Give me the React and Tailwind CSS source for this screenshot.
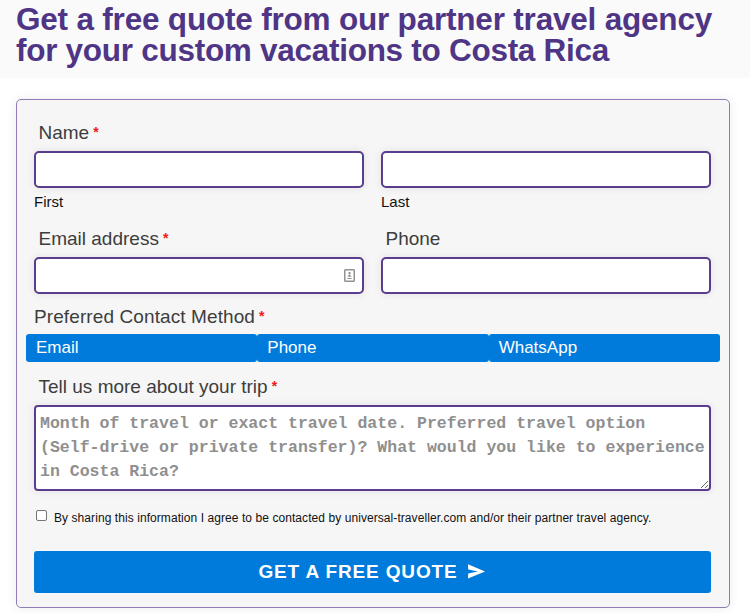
import React, { useState } from 'react';

const contactMethods = ['Email', 'Phone', 'WhatsApp'];

const Required = () => (
  <span className="mb-[3px] ml-[4px] text-[14px] leading-none font-bold text-[#f01818]">*</span>
);

const Label = ({ htmlFor, required, children }) => (
  <label
    htmlFor={htmlFor}
    className="flex h-[24px] items-center pl-[4.5px] text-[19px] text-[#3d3d3d]"
  >
    {children}
    {required && <Required />}
  </label>
);

const TextInput = ({ id, type = 'text', value, onChange }) => (
  <input
    id={id}
    name={id}
    type={type}
    value={value}
    onChange={onChange}
    className="block h-[37px] w-full rounded-[5px] border-2 border-[#5a3d8c] bg-white px-2 shadow-[0_0_8px_rgba(0,0,0,0.09)] outline-none"
  />
);

const AutofillIcon = () => (
  <svg width="11" height="13" viewBox="0 0 11 13" fill="none">
    <rect x="0.75" y="0.75" width="9.5" height="11.5" rx="0.8" stroke="#929292" strokeWidth="1.5" />
    <circle cx="5.5" cy="4.1" r="1.2" fill="#8f8f8f" />
    <path d="M3.5 7.8 5.5 5 7.5 7.8ZM3.4 9h4.2v1H3.4Z" fill="#8f8f8f" />
  </svg>
);

const SendIcon = () => (
  <svg width="17" height="15" viewBox="0 0 17 15" fill="white">
    <path d="M0 0.3 17 7.4 0 14.5 0.2 9.4 10 7.4 0.2 5.4Z" />
  </svg>
);

const App = () => {
  const [form, setForm] = useState({
    first: '',
    last: '',
    email: '',
    phone: '',
    message: '',
    agree: false
  });

  const setField = (name) => (e) => setForm({ ...form, [name]: e.target.value });

  return (
    <div className="h-[613px] overflow-hidden bg-white font-['Liberation_Sans',Arial,sans-serif]">
      <header className="h-[78px] bg-[#fafafa] pt-[4px] pl-[16px]">
        <h1 className="text-[31.5px] leading-[31px] font-bold tracking-[-0.2px] whitespace-nowrap text-[#4f3585]">
          Get a free quote from our partner travel agency
          <br />
          <span className="tracking-[-0.28px]">for your custom vacations to Costa Rica</span>
        </h1>
      </header>

      <form
        onSubmit={(e) => e.preventDefault()}
        className="mt-[21px] ml-[16px] h-[509px] w-[714px] rounded-[5px] border border-[#8f7bb5] bg-[#f6f6f6] pt-[21px] pr-[18px] pl-[17px] shadow-[0_0_12px_rgba(0,0,0,0.08)]"
      >
        {/* Name */}
        <Label htmlFor="first" required>Name</Label>
        <div className="mt-[6px] grid grid-cols-2 gap-[17px]">
          <div>
            <TextInput id="first" value={form.first} onChange={setField('first')} />
            <p className="mt-[4px] text-[15px] leading-[20px] text-[#111]">First</p>
          </div>
          <div>
            <TextInput id="last" value={form.last} onChange={setField('last')} />
            <p className="mt-[4px] text-[15px] leading-[20px] text-[#111]">Last</p>
          </div>
        </div>

        {/* Email and phone */}
        <div className="mt-[15px] grid grid-cols-2 gap-[17px]">
          <div>
            <Label htmlFor="email" required>Email address</Label>
            <div className="relative mt-[6px]">
              <TextInput id="email" type="email" value={form.email} onChange={setField('email')} />
              <span className="absolute top-[12px] right-[9px]">
                <AutofillIcon />
              </span>
            </div>
          </div>
          <div>
            <Label htmlFor="phone">Phone</Label>
            <div className="mt-[6px]">
              <TextInput id="phone" type="tel" value={form.phone} onChange={setField('phone')} />
            </div>
          </div>
        </div>

        {/* Contact method */}
        <div className="mt-[11px] flex h-[24px] items-center text-[19px] tracking-[0.1px] text-[#3d3d3d]">
          Preferred Contact Method
          <Required />
        </div>
        <div className="-mr-[9px] -ml-[8px] mt-[5px] grid grid-cols-3">
          {contactMethods.map((method) => (
            <button
              key={method}
              type="button"
              className="h-[28px] rounded-[3px] bg-[#007bdb] pl-[10px] text-left text-[17px] text-white"
            >
              {method}
            </button>
          ))}
        </div>

        {/* Trip details */}
        <div className="mt-[13px]">
          <Label htmlFor="message" required>Tell us more about your trip</Label>
        </div>
        <textarea
          id="message"
          name="message"
          value={form.message}
          onChange={setField('message')}
          placeholder="Month of travel or exact travel date. Preferred travel option (Self-drive or private transfer)? What would you like to experience in Costa Rica?"
          className="mt-[6px] block h-[86px] w-full overflow-hidden rounded-[4px] border-2 border-[#5a3d8c] bg-white pt-[5px] pr-0 pl-[4px] font-['Liberation_Mono',monospace] text-[16.54px] leading-[24px] font-bold shadow-[0_0_8px_rgba(0,0,0,0.09)] outline-none placeholder:text-[#8f8f8f]"
        />

        {/* Consent */}
        <label className="mt-[17px] flex h-[20px] items-center text-[12px] tracking-[0.07px] whitespace-nowrap text-[#111]">
          <input
            type="checkbox"
            checked={form.agree}
            onChange={(e) => setForm({ ...form, agree: e.target.checked })}
            className="mr-[7px] mb-[5px] ml-[2px] h-[11px] w-[11px] shrink-0 appearance-none rounded-[2px] border border-[#767676] bg-white checked:bg-[#007bdb]"
          />
          By sharing this information I agree to be contacted by universal-traveller.com and/or their partner travel agency.
        </label>

        <button
          type="submit"
          className="mt-[23px] flex h-[42px] w-full items-center justify-center gap-[10px] rounded-[3px] bg-[#007bdb] pt-[1px] pr-[2px] text-[19px] font-bold tracking-[0.85px] text-white"
        >
          GET A FREE QUOTE
          <span className="mb-[3px]">
            <SendIcon />
          </span>
        </button>
      </form>
    </div>
  );
};

export default App;
